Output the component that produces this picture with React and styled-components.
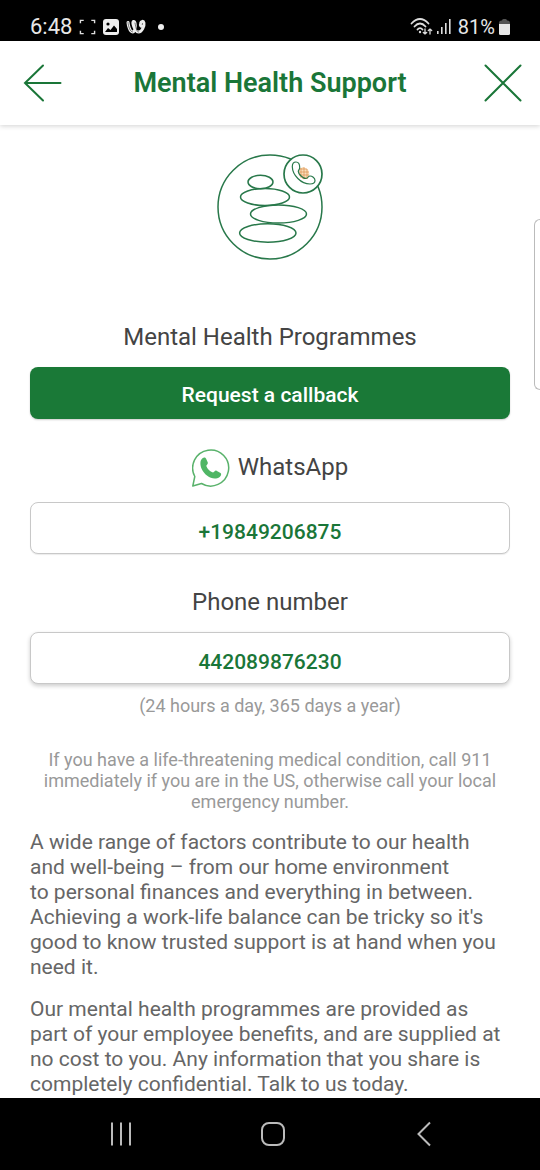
import React from "react";
import styled, { createGlobalStyle } from "styled-components";

const GREEN = "#1a7638";

const GlobalStyle = createGlobalStyle`
  *, *::before, *::after { box-sizing: border-box; }
  body { margin: 0; background: #fff; font-family: Roboto, "Liberation Sans", sans-serif; }
  h1, h2, p { margin: 0; font-weight: 400; }
  svg { display: block; flex: none; }
`;

const Screen = styled.div`
  position: relative;
  display: flex;
  flex-direction: column;
  height: 100vh;
  overflow: hidden;
`;

const StatusBar = styled.div`
  display: flex;
  flex: none;
  align-items: center;
  justify-content: space-between;
  height: 41px;
  padding: 13px 30px 0 30px;
  background: #000;
  color: #e8e8e8;
  font-size: 20px;
  line-height: 24px;
`;

const StatusGroup = styled.div`
  display: flex;
  align-items: center;
  gap: ${(p) => p.$gap}px;
`;

const Clock = styled.span`
  font-size: 22px;
`;

const BatteryLevel = styled.span`
  margin-left: 3px;
`;

const Header = styled.header`
  display: flex;
  flex: none;
  align-items: center;
  justify-content: space-between;
  height: 84px;
  padding: 0 15px;
  background: #fff;
  box-shadow: 0 1px 5px rgba(0, 0, 0, 0.18);
  z-index: 1;
`;

const IconButton = styled.button`
  display: grid;
  place-items: center;
  padding: 0;
  border: 0;
  background: none;
  color: ${(p) => p.$color || GREEN};
`;

const Title = styled.h1`
  color: ${GREEN};
  font-size: 27px;
  line-height: 32px;
  font-weight: 600;
`;

const Content = styled.main`
  display: flex;
  flex: 1;
  flex-direction: column;
  min-height: 0;
  padding: 26px 30px 0;
  overflow-y: auto;
  scrollbar-width: none;
  & > * { flex: none; }
`;

const Hero = styled.div`
  display: flex;
  justify-content: center;
  margin-bottom: 56px;
`;

const Heading = styled.h2`
  display: flex;
  align-items: center;
  justify-content: center;
  gap: 8px;
  min-height: 40px;
  margin-top: ${(p) => p.$top || 0}px;
  margin-bottom: ${(p) => p.$bottom}px;
  color: #444;
  font-size: 24px;
  line-height: 32px;
`;

const PrimaryButton = styled.button`
  width: 100%;
  height: 52px;
  padding: 3px 0 0;
  border: 0;
  border-radius: 8px;
  background: #1a7937;
  color: #fff;
  box-shadow: 0 1px 2px rgba(0, 0, 0, 0.2);
  font: 500 21px/26px Roboto, sans-serif;
`;

const NumberLink = styled.a`
  display: flex;
  align-items: center;
  justify-content: center;
  height: 52px;
  padding-top: 8px;
  border: 1px solid #c8c8c8;
  border-radius: 8px;
  background: #fff;
  color: ${GREEN};
  box-shadow: 0 ${(p) => (p.$raised ? "2px 4px" : "1px 1px")} rgba(0, 0, 0, ${(p) => (p.$raised ? 0.2 : 0.08)});
  font-size: 21px;
  line-height: 26px;
  font-weight: 500;
  text-decoration: none;
`;

const Note = styled.p`
  margin-top: ${(p) => p.$top}px;
  color: #999;
  font-size: 18px;
  line-height: 21px;
  text-align: center;
`;

const Paragraph = styled.p`
  margin-top: ${(p) => p.$top}px;
  color: #666;
  font-size: 21px;
  line-height: 25px;
`;

const EdgeHandle = styled.div`
  position: absolute;
  top: 219px;
  right: 0;
  width: 6px;
  height: 171px;
  border: 1px solid #bbb;
  border-right: 0;
  border-radius: 7px 0 0 7px;
  background: #fff;
  z-index: 2;
`;

const NavBar = styled.nav`
  display: flex;
  flex: none;
  align-items: center;
  justify-content: space-between;
  height: 72px;
  padding: 0 19% 0 20%;
  background: #000;
`;

function CaptureIcon() {
  return (
    <svg width="17" height="18" viewBox="0 0 18 18" fill="none" stroke="#ddd" strokeWidth="1.5">
      <path d="M1.500 5V2H5M13 2h3.500v3M16.500 13v3H13M5 16H1.500v-3" />
    </svg>
  );
}

function PictureIcon() {
  return (
    <svg width="16" height="16" viewBox="0 0 16 16">
      <rect width="16" height="16" rx="3" fill="#eee" />
      <circle cx="5" cy="5" r="1.600" fill="#000" />
      <path d="M2 13l3-4 2.500 2L11 6.500l3 3.500v3z" fill="#000" />
    </svg>
  );
}

function LoopIcon() {
  return (
    <svg width="20" height="16" viewBox="0 0 20 16" fill="none" stroke="#eee" strokeWidth="3" strokeLinecap="round" strokeLinejoin="round">
      <path d="M2 3.500C2.300 7 4 13 6.500 13c2.300 0 3.500-4.500 2.500-9C8.500 1.500 6.500 2 7 5c.8 4 3 8 5.500 8 3.500 0 6-6 5.500-9-.5-2.500-3-2-3.500.5-.5 2 .5 3 2 3" />
      <path d="M2 3.500C2.300 7 4 13 6.500 13M9 4c1 4.500 1.500 9 3.500 9" stroke="#000" strokeWidth="0.500" />
    </svg>
  );
}

function DotIcon() {
  return (
    <svg width="20" height="16" viewBox="0 0 20 16">
      <circle cx="8" cy="8" r="3" fill="#eee" />
    </svg>
  );
}

function WifiIcon() {
  return (
    <svg width="23" height="18" viewBox="0 0 23 18" fill="none" stroke="#ddd" strokeWidth="1.800" strokeLinecap="round">
      <path d="M1.500 5.500C7-.5 13-.5 18.500 5.500M4.500 8.500c3.500-4 7.500-4 11 0M7.500 11.500c1.500-1.800 3.500-1.800 5 0" />
      <circle cx="10" cy="14" r="1.200" fill="#ddd" stroke="none" />
      <path d="M15 11v5M13.300 14.500L15 16l1.700-1.500M20 16v-5M18.300 12.500L20 11l1.700 1.500" strokeWidth="1.300" />
    </svg>
  );
}

function SignalIcon() {
  return (
    <svg width="14" height="16" viewBox="0 0 14 16" fill="#ddd">
      <rect x="0" y="12" width="1.600" height="3" />
      <rect x="4" y="8" width="1.600" height="7" />
      <rect x="8" y="4" width="1.600" height="11" />
      <rect x="12" y="0" width="1.600" height="15" />
    </svg>
  );
}

function BatteryIcon() {
  return (
    <svg width="11" height="17" viewBox="0 0 11 17">
      <path d="M3 1.500Q3 0 4.500 0h2Q8 0 8 1.500h1Q11 1.500 11 4v2H0V4q0-2.500 2-2.500z" fill="#555" />
      <path d="M0 5h11v9.500Q11 16 9.500 16h-8Q0 16 0 14.500z" fill="#e8e8e8" />
    </svg>
  );
}

function BackIcon() {
  return (
    <svg width="48" height="44" viewBox="0 0 48 44" fill="none" stroke="currentColor" strokeWidth="2" strokeLinecap="round">
      <path d="M10 22h35.500M28 4.500L10 22l18 17.500" />
    </svg>
  );
}

function CloseIcon() {
  return (
    <svg width="48" height="44" viewBox="0 0 48 44" fill="none" stroke="currentColor" strokeWidth="2" strokeLinecap="round">
      <path d="M8.500 4.500l35 35M43.500 4.500l-35 35" />
    </svg>
  );
}

function StonesIllustration() {
  return (
    <svg width="110" height="110" viewBox="0 0 110 110" fill="none" stroke="#28784a" strokeWidth="1.500">
      <circle cx="55" cy="56" r="52" />
      <ellipse cx="45.500" cy="31" rx="12.500" ry="6.700" />
      <ellipse cx="50" cy="46" rx="24.500" ry="8.500" />
      <ellipse cx="63.500" cy="63" rx="28" ry="9" />
      <ellipse cx="52.800" cy="82" rx="28.200" ry="9.200" />
      <circle cx="88" cy="23" r="19" fill="#fff" strokeWidth="1.700" />
      <path d="M84 18l4-2 5 2.500 1.500 4.500-2 4.500-4 1-4-3.500z" fill="#f9dfbd" stroke="none" />
      <path d="M85 18h7M84 21h10M84 24h10M87 27h6M86 17v10M89 16v12M92 18v10" stroke="#dc9350" strokeWidth="0.700" />
      <path
        d="M81 11C78.500 11 77.300 13 77.300 15.700C77.500 24 86 33 95 33C98 33 100 31.500 100 29.500C100 27 97 25 95 25C93 25 93 27.500 91 27.500C88 27.500 83.300 23 83.300 20.500C83.300 19 84.700 18.500 84.700 16.500C84.700 14.500 84 11 81 11Z"
        strokeWidth="1.200"
      />
    </svg>
  );
}

function WhatsAppIcon() {
  return (
    <svg width="38" height="40" viewBox="2 -1 38 40">
      <path
        d="M2.800 38l2-9.500A18 18 0 1 1 11.500 35.500z"
        fill="none"
        stroke="#59b26b"
        strokeWidth="1.500"
        strokeLinejoin="round"
      />
      <path
        d="M12.500 10.200c1.500-1.300 3-.8 3.500.3l1.800 4c.5 1.200-1.500 2.800-1.500 3.500 1.200 3 3.500 5.500 6.700 6.500 1 .2 2-2.500 3.500-1.800l4 2.200c1.300.8.500 3-.8 4-6 4-14.500-.5-18-8-1.700-4-2-8.500.8-10.700z"
        fill="#50b665"
      />
    </svg>
  );
}

export default function App() {
  return (
    <>
      <GlobalStyle />
      <Screen>
        <StatusBar>
          <StatusGroup $gap={7}>
            <Clock>6:48</Clock>
            <CaptureIcon />
            <PictureIcon />
            <LoopIcon />
            <DotIcon />
          </StatusGroup>
          <StatusGroup $gap={4}>
            <WifiIcon />
            <SignalIcon />
            <BatteryLevel>81%</BatteryLevel>
            <BatteryIcon />
          </StatusGroup>
        </StatusBar>
        <Header>
          <IconButton type="button" aria-label="Back"><BackIcon /></IconButton>
          <Title>Mental Health Support</Title>
          <IconButton type="button" aria-label="Close"><CloseIcon /></IconButton>
        </Header>
        <Content>
          <Hero><StonesIllustration /></Hero>
          <Heading $bottom={10}>Mental Health Programmes</Heading>
          <PrimaryButton type="button">Request a callback</PrimaryButton>
          <Heading $top={28} $bottom={15}>
            <WhatsAppIcon />
            WhatsApp
          </Heading>
          <NumberLink href="https://wa.me/19849206875">+19849206875</NumberLink>
          <Heading $top={28} $bottom={10}>Phone number</Heading>
          <NumberLink $raised href="tel:442089876230">442089876230</NumberLink>
          <Note $top={11}>(24 hours a day, 365 days a year)</Note>
          <Note $top={33}>
            If you have a life-threatening medical condition, call 911 immediately if you are in the
            US, otherwise call your local emergency number.
          </Note>
          <Paragraph $top={18}>
            A wide range of factors contribute to our health
            <br />
            and well-being – from our home environment
            <br />
            to personal finances and everything in between. Achieving a work-life balance can be
            tricky so it's good to know trusted support is at hand when you need it.
          </Paragraph>
          <Paragraph $top={17}>
            Our mental health programmes are provided as part of your employee benefits, and are
            supplied at no cost to you. Any information that you share is completely confidential.
            Talk to us today.
          </Paragraph>
        </Content>
        <NavBar>
          <IconButton type="button" aria-label="Recent apps" $color="#bbb">
            <svg width="26" height="26" viewBox="0 0 26 26" stroke="currentColor" strokeWidth="2">
              <path d="M4 1.500v23M13 1.500v23M22 1.500v23" />
            </svg>
          </IconButton>
          <IconButton type="button" aria-label="Home" $color="#bbb">
            <svg width="26" height="26" viewBox="0 0 26 26" fill="none" stroke="currentColor" strokeWidth="2">
              <rect x="2" y="2" width="22" height="22" rx="7" />
            </svg>
          </IconButton>
          <IconButton type="button" aria-label="Back" $color="#bbb">
            <svg width="26" height="26" viewBox="0 0 26 26" fill="none" stroke="currentColor" strokeWidth="2">
              <path d="M19 1.500L7.500 13 19 24.500" />
            </svg>
          </IconButton>
        </NavBar>
        <EdgeHandle />
      </Screen>
    </>
  );
}
